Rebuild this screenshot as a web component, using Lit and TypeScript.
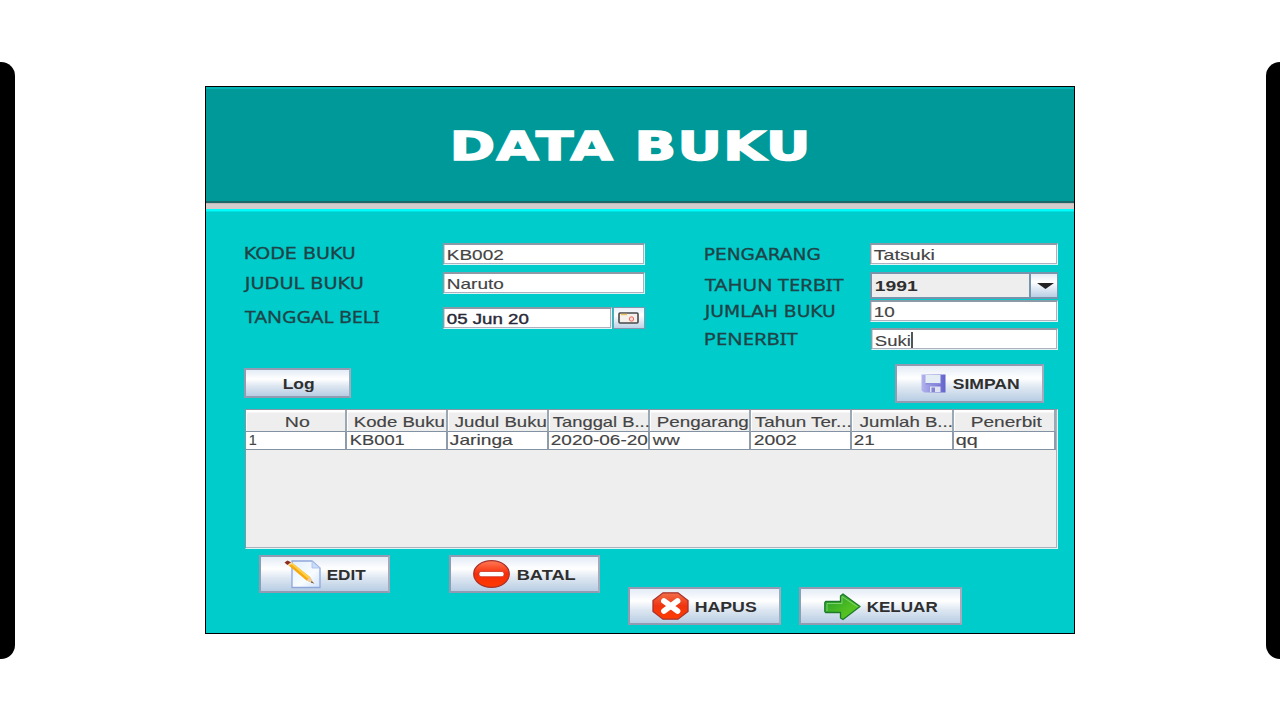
import { LitElement, html, svg, css } from "lit";
import { customElement } from "lit/decorators.js";

// A line of text set to an exact width, dx px in from the left of its slot.
const line = (value: string, cls: string, dx: number, base: number, width: number) => html`
  <svg class="line ${cls}" width="1" height="1">
    <text x=${dx} y=${base} textLength=${width} lengthAdjust="spacingAndGlyphs">${value}</text>
  </svg>`;

const pencil = svg`
  <defs><linearGradient id="pg" x1="0" y1="0" x2="1" y2="1"><stop offset="0" stop-color="#e2efff"/><stop offset=".6" stop-color="#f8fcff"/><stop offset="1" stop-color="#cfe2fa"/></linearGradient></defs>
  <path d="M8 1H28L36 8V27.5H8Z" fill="url(#pg)" stroke="#8fa6dc" stroke-width="1.3"/>
  <path d="M28 1V8H36Z" fill="#c9dcfa" stroke="#a5bbe8" stroke-width=".8"/>
  <path d="M3.5 4.5L7 2L26 17L29.5 23L22.500 20.500Z" fill="#f8a90c"/>
  <path d="M5.500 3L7 2L26 17L24.500 19Z" fill="#ffd04a"/>
  <path d="M22.500 20.500L26 17L30 23.500Z" fill="#efc9a0"/>
  <path d="M27.500 21L30.500 23.700L26.800 22.500Z" fill="#6b5146"/>
  <path d="M.5 2.500L3.500 .5L7 2.200L3.300 5Z" fill="#8c2f22"/>
  <path d="M4.500 5.300L8 2.800" stroke="#e8e0d4" stroke-width="1.200"/>`;

const noEntry = svg`
  <defs><linearGradient id="ng" x1="0" y1="0" x2="0" y2="1"><stop offset="0" stop-color="#ff7a55"/><stop offset=".5" stop-color="#f62c08"/><stop offset="1" stop-color="#ff3a00"/></linearGradient></defs>
  <ellipse cx="18.500" cy="14" rx="17.800" ry="13.300" fill="url(#ng)" stroke="#a8322c" stroke-width="1.200"/>
  <rect x="6" y="11.500" width="25" height="5.200" rx="2" fill="#fff" stroke="#c93a26" stroke-width=".8"/>`;

const cross = svg`
  <defs><linearGradient id="cg" x1="0" y1="0" x2="0" y2="1"><stop offset="0" stop-color="#f2704a"/><stop offset=".5" stop-color="#ef3410"/><stop offset="1" stop-color="#ff3c00"/></linearGradient></defs>
  <path d="M11 .8H26L36 8.500V19.500L26 27.200H11L1 19.500V8.500Z" fill="url(#cg)" stroke="#a8322c" stroke-width="1.300"/>
  <path d="M12 9L25.500 19M25.500 9L12 19" stroke="#fff" stroke-width="5.800" stroke-linecap="round"/>`;

const arrow = svg`
  <defs><linearGradient id="ag" x1="0" y1="0" x2="1" y2="1"><stop offset="0" stop-color="#1f9a2c"/><stop offset=".6" stop-color="#4fbe22"/><stop offset="1" stop-color="#62cf1c"/></linearGradient></defs>
  <path d="M1.500 8.500H16.500V3L19 1L36 13.500L19 26.500L16.500 25V19.500H1.500L.8 18.500V9.500Z" fill="url(#ag)" stroke="#1d7a2e" stroke-width="1.300" stroke-linejoin="round"/>
  <path d="M3 18V10.500H18V3.500L33.500 13.700" fill="none" stroke="#9be08a" stroke-width="1" opacity=".7"/>`;

const floppy = svg`
  <defs><linearGradient id="fg" x1="0" y1="0" x2="1" y2="0"><stop offset="0" stop-color="#b4b4ee"/><stop offset="1" stop-color="#6262cc"/></linearGradient></defs>
  <path d="M.5 .5H24.500V18.500H3L.5 16.500Z" fill="url(#fg)"/>
  <rect x="4.500" y="1" width="15" height="8.500" fill="#e4edf3"/>
  <rect x="4.500" y="9" width="15" height="1.500" fill="#8c8cdc"/>
  <path d="M9 12.500H19.500V18H9Z" fill="#dfe3f0"/>
  <rect x="10.500" y="13.500" width="3.500" height="4.500" fill="#8484d4"/>`;

const icon = (shape: unknown, w: number, h: number) =>
  html`<svg class="icon" width=${w} height=${h} viewBox="0 0 ${w} ${h}">${shape}</svg>`;

const columns: [string, number, number, string, number, number][] = [
  ["No", 38, 25, "1", 2, 8],
  ["Kode Buku", 6, 91, "KB001", 2, 55],
  ["Judul Buku", 6, 92, "Jaringa", 1, 63],
  ["Tanggal B...", 3, 97, "2020-06-20", 1, 97],
  ["Pengarang", 6, 92, "ww", 2, 27],
  ["Tahun Ter...", 3, 97, "2002", 2, 43],
  ["Jumlah B...", 7, 93, "21", 1, 21],
  ["Penerbit", 16, 71, "qq", 1, 22],
];

@customElement("app-root")
export class AppRoot extends LitElement {
  static styles = css`
    :host { display: block; width: 1280px; height: 720px; background: #fff; overflow: hidden; }
    * { box-sizing: border-box; }
    .stage { display: flex; justify-content: space-between; height: 720px; }
    .edge { height: 597px; margin-top: 62px; background: #000; }
    .edge.left { width: 15px; border-radius: 0 14px 14px 0; }
    .edge.right { width: 14px; border-radius: 14px 0 0 14px; }
    .frame { width: 870px; height: 548px; margin-top: 86px; margin-left: -1px; border: 1px solid #000; background: #00cccc; display: flex; flex-direction: column; }
    .line { display: block; flex: none; overflow: visible; }
    .line text { white-space: pre; transform: translate(.8px, .7px); }
    .icon { display: block; flex: none; overflow: visible; }
    .head { flex: none; height: 116px; background: #009999; border-top: 2px solid #00b4b4; border-bottom: 2px solid #1f6666; }
    .title { font: bold 38.500px "DejaVu Sans", sans-serif; fill: #fff; stroke: #fff; stroke-width: 1.500px; letter-spacing: 1px; }
    .rule { flex: none; height: 9px; background: linear-gradient(#c2baba 0 1px, #d4cccc 1px 6px, #00ffff 6px 8px, #00e2e2 8px 9px); }
    .form { display: flex; height: 152px; padding-top: 31px; padding-left: 38px; }
    .col { flex: none; width: 460px; }
    .col.two { width: 354px; }
    .row { display: flex; }
    .gap6 { margin-top: 6px; }
    .gap7 { margin-top: 7px; }
    .gap13 { margin-top: 13px; }
    .gap1 { margin-top: 1px; }
    .slot { flex: none; width: 199px; }
    .col.two .slot { width: 166px; }
    .label { font: 15.200px "DejaVu Sans", sans-serif; fill: #1f4346; stroke: #1f4346; stroke-width: .3px; }
    .serifed { font-family: "Noto Sans", sans-serif; font-size: 15.500px; }
    .value { font: 14.500px "Liberation Sans", sans-serif; fill: #444; stroke: #444; stroke-width: .15px; }
    .dark { fill: #2a2a38; stroke: #2a2a38; stroke-width: .4px; }
    .bold { font: bold 14.500px "Liberation Sans", sans-serif; fill: #2f2f2f; }
    .field { width: 202px; height: 22px; background: #fff; border: 1px solid #8b9aa6; border-top-width: 2px; border-right: 1px solid #e3f6f6; border-bottom: 1px solid #dcf4f4; box-shadow: inset -1px -1px #aeb0c0, inset 1px 0 #d5d0d8; display: flex; }
    .date { width: 169px; }
    .right { width: 188px; }
    .last { width: 187px; margin-left: 1px; }
    .caret { width: 2px; height: 16px; margin: 2px 0 0 38px; background: #555; }
    .picker { width: 32px; height: 22px; margin-left: 1px; border: 1px solid #8495ad; background: linear-gradient(#e6eef7, #fff 35%, #bfd2e6); padding: 4px 0 0 4px; }
    .combo { width: 188px; height: 27px; border: 2px solid #7695ad; border-right-width: 1px; background: #eee; display: flex; justify-content: space-between; }
    .drop { width: 28px; border-left: 2px solid #7695ad; background: linear-gradient(#e2ebf5, #fff 35%, #b8cfe5); padding: 9px 0 0 6px; }
    .button { border: 2px solid #929bb2; border-right-color: #a8a9bd; background: linear-gradient(#e4ecf6, #fff 35%, #dfe8f2 60%, #b8cde3); display: flex; flex: none; }
    .button .bold text { transform: translate(1.700px, .7px); }
    .tools { display: flex; justify-content: space-between; height: 45px; padding: 0 30px 0 38px; }
    .log { width: 107px; height: 30px; margin-top: 4px; }
    .save { width: 149px; height: 39px; padding: 8px 0 0 24px; }
    .table { flex: none; width: 813px; height: 140px; margin-left: 39px; background: #eee; border: 1px solid #8496a6; border-right: 1px solid #e6f2f4; border-bottom: 1px solid #dcf4f4; box-shadow: inset -1px -1px #aeb0bc; }
    .grid { display: grid; grid-template-columns: 101px 101px 101px 101px 101px 101px 102px 102px; }
    .th { height: 22px; border-right: 2px solid #9aa7b4; border-bottom: 1px solid #8292a2; background: linear-gradient(#fff 0 2px, #eee 3px); box-shadow: inset 1px 0 #fff; }
    .td { height: 18px; border-right: 2px solid #8d9bab; border-bottom: 1px solid #8292a2; background: #fff; }
    .bottom { display: flex; padding-left: 53px; padding-top: 6px; }
    .edit { width: 131px; height: 38px; padding: 3px 0 0 23px; }
    .cancel { width: 151px; height: 38px; padding: 3px 0 0 22px; margin-left: 59px; }
    .delete { width: 153px; height: 38px; padding: 3px 0 0 22px; margin: 32px 0 0 28px; }
    .exit { width: 163px; height: 38px; padding: 4px 0 0 23px; margin: 32px 0 0 18px; }
  `;

  render() {
    return html`
      <div class="stage">
        <div class="edge left"></div>
        <div class="frame">
          <div class="head">${line("DATA BUKU", "title", 243, 70, 362)}</div>
          <div class="rule"></div>
          <div class="form">
            <div class="col">
              <div class="row"><div class="slot">${line("KODE BUKU", "label", -1, 15, 112)}</div>
                <div class="field">${line("KB002", "value", 2, 14, 57)}</div></div>
              <div class="row gap7"><div class="slot">${line("JUDUL BUKU", "label", 0, 16, 119)}</div>
                <div class="field">${line("Naruto", "value", 2, 14, 57)}</div></div>
              <div class="row gap13"><div class="slot">${line("TANGGAL BELI", "label serifed", 0, 15, 135)}</div>
                <div class="field date">${line("05 Jun 20", "value dark", 2, 14, 82)}</div>
                <div class="picker"><svg class="icon" width="22" height="13">
                  <rect x="1" y="1" width="19" height="10" rx="1" fill="#f4f1ec" stroke="#484848" stroke-width="1.600"/>
                  <path d="M3 2.500H9" stroke="#f0c060" stroke-width="1.500"/>
                  <circle cx="13.500" cy="7" r="2.200" fill="#ffd9d4" stroke="#ee6a60"/>
                </svg></div></div>
            </div>
            <div class="col two">
              <div class="row"><div class="slot">${line("PENGARANG", "label", -1, 16, 117)}</div>
                <div class="field right">${line("Tatsuki", "value", 2, 14, 61)}</div></div>
              <div class="row gap7"><div class="slot">${line("TAHUN TERBIT", "label serifed", 0, 18, 139)}</div>
                <div class="combo">${line("1991", "bold", 2, 16, 43)}
                  <div class="drop"><svg class="icon" width="18" height="8"><path d="M0 0H17L8.500 6Z" fill="#222"/></svg></div></div></div>
              <div class="row gap1"><div class="slot">${line("JUMLAH BUKU", "label", 0, 16, 131)}</div>
                <div class="field right">${line("10", "value", 2, 14, 21)}</div></div>
              <div class="row gap6"><div class="slot">${line("PENERBIT", "label serifed", -1, 16, 94)}</div>
                <div class="field last">${line("Suki", "value", 2, 15, 36)}<div class="caret"></div></div></div>
            </div>
          </div>
          <div class="tools">
            <div class="button log">${line("Log", "bold", 35, 18, 32)}</div>
            <div class="button save">${icon(floppy, 25, 19)}${line("SIMPAN", "bold", 5, 14, 67)}</div>
          </div>
          <div class="table">
            <div class="grid">
              ${columns.map(([h, x, w]) => html`<div class="th">${line(h, "value", x, 16.500, w)}</div>`)}
              ${columns.map(([, , , v, x, w]) => html`<div class="td">${line(v, "value", x, 12.500, w)}</div>`)}
            </div>
          </div>
          <div class="bottom">
            <div class="button edit">${icon(pencil, 37, 29)}${line("EDIT", "bold", 4, 19, 39)}</div>
            <div class="button cancel">${icon(noEntry, 37, 28)}${line("BATAL", "bold", 5, 19, 59)}</div>
            <div class="button delete">${icon(cross, 37, 28)}${line("HAPUS", "bold", 4, 19, 62)}</div>
            <div class="button exit">${icon(arrow, 37, 28)}${line("KELUAR", "bold", 4, 18, 71)}</div>
          </div>
        </div>
        <div class="edge right"></div>
      </div>`;
  }
}
